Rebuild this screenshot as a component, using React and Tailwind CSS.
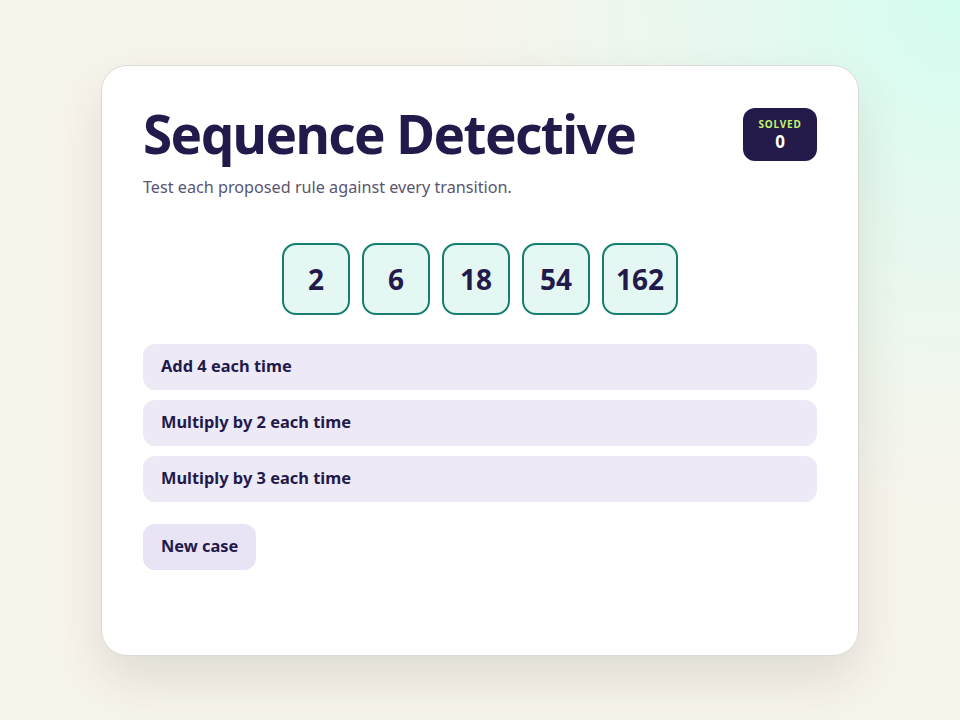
import { useState } from "react";

const rules = ["Add 4 each time", "Multiply by 2 each time", "Multiply by 3 each time"];
const numbers = [2, 6, 18, 54, 162];

export default function App() {
  const [solved] = useState(0);

  return (
    <div
      className="min-h-screen w-full flex items-center justify-center bg-[#f7f4ec] bg-[radial-gradient(circle_at_100%_0%,#d4fdf0_0%,#e6f9ef_18%,rgba(247,244,236,0)_42%)]"
      style={{ fontFamily: '"Noto Sans", "Open Sans", sans-serif' }}
    >
      {/* card */}
      <div className="w-[758px] min-h-[591px] bg-white rounded-[26px] border border-[#dcdad6] shadow-[0_24px_50px_rgba(60,50,30,0.12)] px-[41px] pt-[41px] pb-[40px]">
        <div className="flex items-start justify-between">
          <div>
            <h1 className="text-[53px] leading-none font-bold tracking-[-0.03em] text-[#221a4b]">
              Sequence Detective
            </h1>
            <p className="mt-[15px] text-[16.2px] leading-6 text-[#5a5570]">
              Test each proposed rule against every transition.
            </p>
          </div>
          <div className="mt-px w-[74px] h-[53px] rounded-[12px] bg-[#231a4a] flex flex-col items-center justify-center">
            <span className="text-[10px] leading-[12px] font-bold tracking-[0.08em] text-[#c5f36b]">SOLVED</span>
            <span className="mt-[2px] text-[17px] leading-[19px] font-bold text-white">{solved}</span>
          </div>
        </div>

        {/* sequence */}
        <div className="mt-[44px] flex justify-center gap-3">
          {numbers.map((n) => (
            <div
              key={n}
              className="min-w-[68px] h-[72px] px-3 rounded-[14px] border-2 border-[#177e72] bg-[#e5f7f2] flex items-center justify-center text-[28px] font-bold text-[#221a4b]"
            >
              {n}
            </div>
          ))}
        </div>

        {/* rules */}
        <div className="mt-[29px] flex flex-col gap-[10px]">
          {rules.map((r) => (
            <button
              key={r}
              className="h-[46px] w-full rounded-[12px] bg-[#ede9f6] text-left px-[18px] text-[16.4px] font-bold text-[#221a4b]"
            >
              {r}
            </button>
          ))}
        </div>

        <button className="mt-[22px] h-[46px] px-[18px] rounded-[12px] bg-[#e8e4f5] text-[16.4px] font-bold text-[#221a4b]">
          New case
        </button>
      </div>
    </div>
  );
}
